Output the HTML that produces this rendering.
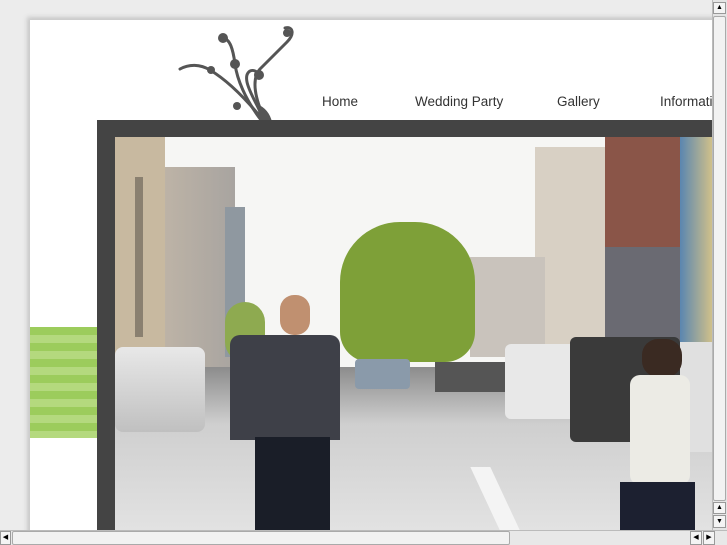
<!DOCTYPE html>
<html><head><style>
*{margin:0;padding:0;box-sizing:border-box}
body{width:727px;height:545px;overflow:hidden;background:#ececec;position:relative;font-family:"Liberation Sans","DejaVu Sans",sans-serif}
.a{position:absolute}
</style></head><body>
<div class="a" style="left:27px;top:17px;width:690px;height:520px;background:#c8c8c8;filter:blur(2px)"></div>
<div class="a" style="left:30px;top:20px;width:682px;height:510px;background:#fff"></div>
<svg class="a" style="left:175px;top:24px" width="125" height="98" viewBox="0 0 125 98">
<g fill="none" stroke="#555" stroke-width="3" stroke-linecap="round">
<path d="M88 96 C75 80 55 58 35 46 C25 40 14 40 5 45"/>
<path d="M86 96 C70 75 62 55 60 40 C58 25 55 15 48 14"/>
<path d="M90 96 C80 75 76 55 85 45 C95 35 105 25 112 18 C120 10 118 2 110 4"/>
<path d="M88 94 C82 80 74 68 72 58 C70 48 76 44 82 48"/>
</g>
<g fill="#555"><circle cx="36" cy="46" r="4"/><circle cx="48" cy="14" r="5"/><circle cx="112" cy="9" r="4"/><circle cx="60" cy="40" r="5"/><circle cx="84" cy="51" r="5"/><path d="M82 80 q12 5 15 18 h-12z"/><circle cx="62" cy="82" r="4"/></g>
</svg>
<div class="a" style="top:94px;left:322px;font-size:13.5px;color:#333;white-space:nowrap">Home</div>
<div class="a" style="top:94px;left:415px;font-size:13.5px;color:#333;white-space:nowrap">Wedding Party</div>
<div class="a" style="top:94px;left:557px;font-size:13.5px;color:#333;white-space:nowrap">Gallery</div>
<div class="a" style="top:94px;left:660px;width:52px;overflow:hidden;font-size:13.5px;color:#333;white-space:nowrap">Information</div>
<div class="a" style="left:30px;top:327px;width:67px;height:111px;background:repeating-linear-gradient(#9ccc5c 0 8px,#b4d97e 8px 16px)"></div>
<div class="a" style="left:97px;top:120px;width:615px;height:410px;background:#444"></div>
<div class="a" style="left:115px;top:137px;width:597px;height:393px;overflow:hidden;background:#f6f6f4">
 <div class="a" style="left:0;top:0;width:50px;height:230px;background:#c8b9a0"></div>
 <div class="a" style="left:50px;top:30px;width:70px;height:200px;background:linear-gradient(90deg,#bdb3a6,#a8a4a0)"></div>
 <div class="a" style="left:20px;top:40px;width:8px;height:160px;background:#8a8070"></div>
 <div class="a" style="left:110px;top:70px;width:20px;height:150px;background:#8f98a0"></div>
 <div class="a" style="left:110px;top:165px;width:40px;height:60px;border-radius:20px;background:#8eaa50"></div>
 <div class="a" style="left:420px;top:10px;width:75px;height:210px;background:#d8d0c4"></div>
 <div class="a" style="left:490px;top:0;width:75px;height:170px;background:#8a5548"></div>
 <div class="a" style="left:490px;top:110px;width:75px;height:110px;background:#6a6a72"></div>
 <div class="a" style="left:565px;top:0;width:32px;height:220px;background:linear-gradient(90deg,#5a86b0,#d0c08a)"></div>
 <div class="a" style="left:355px;top:120px;width:75px;height:100px;background:#c9c3bc"></div>
 <div class="a" style="left:225px;top:85px;width:135px;height:140px;border-radius:60px 60px 30px 30px;background:#7ea038"></div>
 <div class="a" style="left:0;top:230px;width:597px;height:163px;background:linear-gradient(#8c8c8c,#cfcfcf 35%,#e2e2e2)"></div>
 <div class="a" style="left:0;top:210px;width:90px;height:85px;background:linear-gradient(#e8e8e8,#c0c0c0);border-radius:8px"></div>
 <div class="a" style="left:240px;top:222px;width:55px;height:30px;background:#8a9aaa;border-radius:4px"></div>
 <div class="a" style="left:320px;top:225px;width:75px;height:30px;background:#555"></div>
 <div class="a" style="left:390px;top:207px;width:85px;height:75px;background:#e8e8e8;border-radius:6px"></div>
 <div class="a" style="left:455px;top:200px;width:110px;height:105px;background:#3a3a3a;border-radius:6px"></div>
 <div class="a" style="left:565px;top:205px;width:32px;height:110px;background:#e0e0e0"></div>
 <div class="a" style="left:370px;top:330px;width:20px;height:63px;background:#f4f4f4;transform:skewX(25deg)"></div>
 <div class="a" style="left:115px;top:198px;width:110px;height:105px;background:#3e4048;border-radius:10px 10px 0 0"></div>
 <div class="a" style="left:140px;top:300px;width:75px;height:93px;background:#1a1e28"></div>
 <div class="a" style="left:165px;top:158px;width:30px;height:40px;border-radius:14px;background:#c09070"></div>
 <div class="a" style="left:527px;top:202px;width:40px;height:38px;border-radius:16px;background:#3a2a22"></div>
 <div class="a" style="left:515px;top:238px;width:60px;height:110px;background:#ecebe5;border-radius:10px"></div>
 <div class="a" style="left:505px;top:345px;width:75px;height:48px;background:#1c2030"></div>
</div>
<div class="a" style="left:712px;top:0;width:15px;height:530px;background:#e4e4e4;border-left:1px solid #bbb"></div>
<div class="a" style="left:713px;top:2px;width:13px;height:12px;background:#f4f4f4;border:1px solid #999;font-size:7px;text-align:center;line-height:10px">▲</div>
<div class="a" style="left:713px;top:16px;width:13px;height:485px;background:#f2f2f2;border:1px solid #aaa;border-radius:2px"></div>
<div class="a" style="left:713px;top:502px;width:13px;height:12px;background:#f4f4f4;border:1px solid #999;font-size:7px;text-align:center;line-height:10px">▲</div>
<div class="a" style="left:713px;top:515px;width:13px;height:13px;background:#f4f4f4;border:1px solid #999;font-size:7px;text-align:center;line-height:11px">▼</div>
<div class="a" style="left:0;top:530px;width:727px;height:15px;background:#e8e8e8;border-top:1px solid #bbb"></div>
<div class="a" style="left:0;top:531px;width:11px;height:14px;background:#f4f4f4;border:1px solid #999;font-size:7px;line-height:12px;text-align:center">◀</div>
<div class="a" style="left:12px;top:531px;width:498px;height:14px;background:#f2f2f2;border:1px solid #aaa;border-radius:2px"></div>
<div class="a" style="left:690px;top:531px;width:12px;height:14px;background:#f4f4f4;border:1px solid #999;font-size:7px;line-height:12px;text-align:center">◀</div>
<div class="a" style="left:703px;top:531px;width:12px;height:14px;background:#f4f4f4;border:1px solid #999;font-size:7px;line-height:12px;text-align:center">▶</div>
</body></html>
